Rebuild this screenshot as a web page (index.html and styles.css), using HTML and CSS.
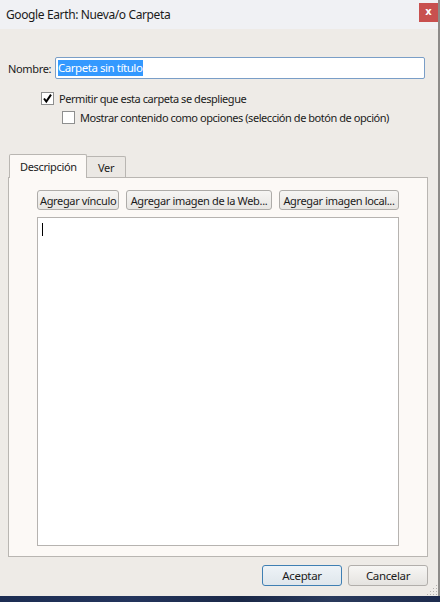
FILE: index.html
```html
<!DOCTYPE html>
<html lang="es">
<head>
<meta charset="utf-8">
<link rel="stylesheet" href="styles.css">
<title>Google Earth: Nueva/o Carpeta</title>
</head>
<body>
<div class="window">
  <div class="titlebar">
    <span class="title">Google Earth: Nueva/o Carpeta</span>
    <span class="close">x</span>
  </div>
  <div class="content">
    <div class="name-row">
      <label class="name-label">Nombre:</label>
      <div class="name-input"><span class="sel">Carpeta sin título</span></div>
    </div>
    <div class="check-row first">
      <span class="box"><svg width="11" height="11" viewBox="0 0 11 11"><path d="M2 5.5 L4.3 8.6 L9 1.6" fill="none" stroke="#000" stroke-width="2"/></svg></span>
      <span>Permitir que esta carpeta se despliegue</span>
    </div>
    <div class="check-row second">
      <span class="box"></span>
      <span>Mostrar contenido como opciones (selección de botón de opción)</span>
    </div>
    <div class="tabs">
      <div class="tab active">Descripción</div>
      <div class="tab">Ver</div>
    </div>
    <div class="panel">
      <div class="tool-row">
        <button class="btn">Agregar vínculo</button>
        <button class="btn">Agregar imagen de la Web...</button>
        <button class="btn">Agregar imagen local...</button>
      </div>
      <div class="editor"><span class="caret"></span></div>
    </div>
    <div class="footer">
      <button class="dbtn default">Aceptar</button>
      <button class="dbtn">Cancelar</button>
    </div>
    <div class="grip"></div>
  </div>
</div>
<div class="desktop"></div>
</body>
</html>
```
FILE: styles.css
```css
* { box-sizing: border-box; }
html, body { margin: 0; padding: 0; }
body {
  width: 440px;
  height: 602px;
  overflow: hidden;
  background: #1b2a4e;
  font-family: "Noto Sans", "Open Sans", sans-serif;
  font-size: 11px;
  letter-spacing: -0.35px;
  color: #1b1b1b;
}
.window {
  width: 440px;
  height: 596px;
  background: #eeebe7;
  border-right: 2px solid #8d8b88;
  display: flex;
  flex-direction: column;
}
.titlebar {
  height: 29px;
  background: #f0f1f4;
  display: flex;
  align-items: center;
  justify-content: space-between;
  padding-left: 6px;
  padding-right: 0;
}
.title {
  font-size: 12px;
  letter-spacing: -0.38px;
  color: #1a1a1a;
  margin-top: 0;
}
.close {
  width: 19px;
  height: 19px;
  background: #c8504f;
  color: #fff;
  font-weight: bold;
  font-size: 10px;
  letter-spacing: 0;
  line-height: 17px;
  text-align: center;
  margin-top: -4px;
  font-family: "DejaVu Sans", sans-serif;
}
.content {
  position: relative;
  flex: 1;
  padding: 28px 0 0 8px;
  display: flex;
  flex-direction: column;
}
.name-row {
  display: flex;
  align-items: center;
  height: 22px;
}
.name-label {
  width: 47px;
}
.name-input {
  width: 370px;
  height: 22px;
  border: 1px solid #7a9ec7;
  border-radius: 2px;
  background: #fff;
  padding: 2px 0 0 2px;
}
.sel {
  display: inline-block;
  background: #3399ff;
  color: #fff;
  height: 16px;
  line-height: 16px;
  font-size: 11.5px;
  letter-spacing: -0.45px;
  padding-right: 1px;
}
.check-row {
  display: flex;
  align-items: center;
  height: 13px;
  gap: 5px;
  white-space: nowrap;
  letter-spacing: -0.45px;
}
.check-row.first { margin: 13px 0 0 33px; }
.check-row.second { margin: 6px 0 0 54px; }
.box {
  width: 13px;
  height: 13px;
  border: 1px solid #8e8f8f;
  background: #fff;
  display: flex;
  align-items: center;
  justify-content: center;
}
.tabs {
  display: flex;
  align-items: flex-end;
  margin-top: 30px;
  height: 23px;
}
.tab {
  height: 21px;
  border: 1px solid #b9b6b2;
  border-bottom: none;
  background: #ebe8e4;
  padding: 3px 10px 0 10px;
  margin-left: -1px;
  border-radius: 2px 2px 0 0;
  white-space: nowrap;
}
.tab.active {
  height: 24px;
  margin-bottom: -1px;
  background: #fcf9f6;
  padding: 4px 9px 0 10px;
  margin-left: 1px;
  position: relative;
  z-index: 1;
  width: 78px;
}
.tab:not(.active) {
  width: 40px;
  padding-left: 11px;
}
.panel {
  width: 420px;
  height: 380px;
  border: 1px solid #b9b6b2;
  background: #fcf9f6;
  padding: 12px 0 0 28px;
  display: flex;
  flex-direction: column;
}
.tool-row {
  display: flex;
  gap: 7px;
  height: 20px;
}
.btn {
  font: inherit;
  letter-spacing: inherit;
  white-space: nowrap;
  color: #1b1b1b;
  height: 20px;
  padding: 0 2px;
  border: 1px solid #aeaca9;
  border-radius: 3px;
  background: linear-gradient(#f6f5f3, #e7e5e2);
}
.tool-row .btn:nth-child(1) { width: 82px; }
.tool-row .btn:nth-child(2) { width: 146px; }
.tool-row .btn:nth-child(3) { width: 120px; }
.editor {
  margin-top: 7px;
  width: 362px;
  height: 329px;
  border: 1px solid #b6b3b0;
  background: #fff;
  padding: 5px 0 0 4px;
}
.caret {
  display: block;
  width: 1px;
  height: 13px;
  background: #000;
}
.footer {
  display: flex;
  justify-content: flex-end;
  gap: 6px;
  margin-top: 8px;
  width: 420px;
}
.dbtn {
  font: inherit;
  letter-spacing: inherit;
  font-size: 11.5px;
  color: #1b1b1b;
  width: 80px;
  height: 21px;
  border: 1px solid #b1aeab;
  border-radius: 3px;
  background: linear-gradient(#f7f6f4, #e5e3e0);
}
.dbtn.default {
  border-color: #3f7fb3;
  background: linear-gradient(#eef3f7, #dfe6ec);
}
.grip {
  position: absolute;
  right: 1px;
  bottom: 1px;
  width: 11px;
  height: 11px;
  background-image: radial-gradient(circle, #b5b2ae 0.8px, transparent 1px);
  background-size: 3px 3px;
  clip-path: polygon(100% 0, 100% 100%, 0 100%);
}
.desktop {
  height: 6px;
  background: linear-gradient(90deg, #1c2d52, #23345c 30%, #1a2847 55%, #2a3a5c 75%, #1d2b4d);
}
```
